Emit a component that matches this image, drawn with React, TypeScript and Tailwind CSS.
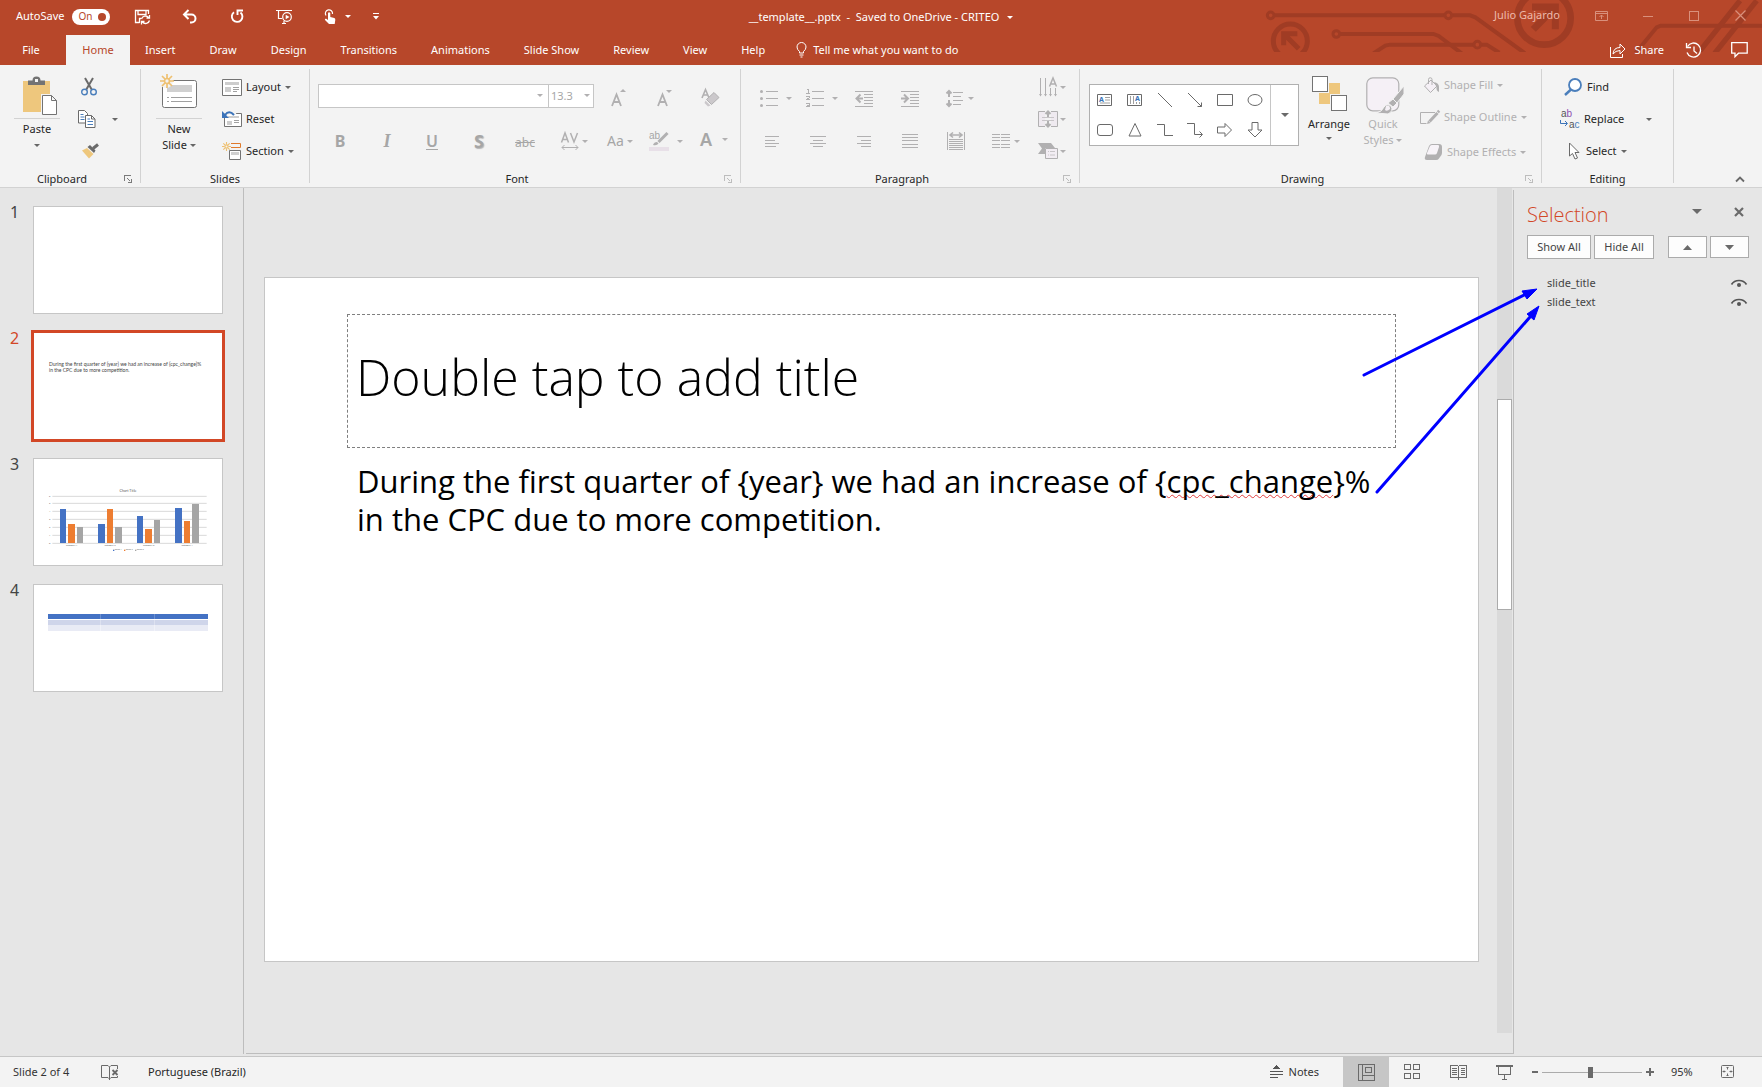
import type { ReactNode } from "react";

type IconProps = { w: number; h: number; children: ReactNode; crisp?: boolean };

function Icon({ w, h, children, crisp }: IconProps) {
  return (
    <svg
      width={w}
      height={h}
      viewBox={`0 0 ${w} ${h}`}
      fill="none"
      aria-hidden="true"
      className="shrink-0 overflow-visible"
      shapeRendering={crisp ? "crispEdges" : "auto"}
    >
      {children}
    </svg>
  );
}

function Caret({ color = "#666666" }: { color?: string }) {
  return (
    <Icon w={6} h={3}>
      <path d="M0 0h6L3 3z" fill={color} />
    </Icon>
  );
}

const OFF = "#b1b0b1";

/* ---------- Title bar ---------- */

function Circuit() {
  return (
    <svg
      className="pointer-events-none absolute top-0 right-0"
      width="522"
      height="52"
      viewBox="0 0 1566 156"
      fill="none"
      stroke="#a03c24"
      aria-hidden="true"
    >
      <g strokeWidth="12">
        <circle cx="92" cy="46" r="10" strokeWidth="9" />
        <path d="M102 46H612M637 46H690L706 52L855 160" />
        <circle cx="625" cy="46" r="10" strokeWidth="9" />
        <circle cx="289" cy="102" r="10" strokeWidth="9" />
        <path d="M300 102H580L596 108L665 160" />
        <path d="M400 160L436 137L450 134H700M724 134H740L778 158" />
        <circle cx="712" cy="134" r="10" strokeWidth="9" />
        <path d="M1186 160L1250 82L1262 77H1566" />
        <path d="M1374 160L1500 2M1424 160L1550 2" strokeWidth="16" />
      </g>
      <circle cx="151" cy="123" r="51" strokeWidth="15" />
      <path d="M131 136V101H172M134 104L176 146" strokeWidth="15" />
      <circle cx="912" cy="54" r="80" strokeWidth="20" />
      <path d="M876 21H946V88M941 26L880 88" strokeWidth="21" />
    </svg>
  );
}

function TitleBar() {
  return (
    <header className="relative flex h-[35px] items-center px-4 text-white">
      <div className="flex flex-1 items-center pb-0.5">
        <span className="text-[11px]">AutoSave</span>
        <button
          type="button"
          role="switch"
          aria-checked="true"
          aria-label="AutoSave"
          className="ml-2 flex h-4 w-[38px] items-center justify-between rounded-full bg-white pr-1 pl-1.5 text-[10px] text-[#b7472a]"
        >
          On
          <span className="h-2 w-2 rounded-full bg-[#b7472a]" />
        </button>
        <button type="button" aria-label="Save" className="ml-[25px]">
          <Icon w={16} h={16}>
            <path d="M13.5 5V1.500H.5v12H4.500M4.500 14V9.500H6M3 1.500v4h8v-4" stroke="#fff" strokeWidth="1.300" />
            <path d="M6.500 10a4 4 0 0 1 7-1.500M14.500 6v3h-3M14.500 11.500a4 4 0 0 1-7 1.500M6.500 15.500v-3h3" stroke="#fff" strokeWidth="1.300" />
          </Icon>
        </button>
        <button type="button" aria-label="Undo" className="ml-[31px]">
          <Icon w={16} h={16}>
            <path d="M6.500 1L2 5.500L6.500 10M2.500 5.500H9.500a4 4 0 0 1 0 8H8" stroke="#fff" strokeWidth="2" />
          </Icon>
        </button>
        <button type="button" aria-label="Repeat" className="ml-[31px]">
          <Icon w={16} h={16}>
            <path d="M11.500 3.500A5.300 5.300 0 1 1 5 3.300" stroke="#fff" strokeWidth="1.900" />
            <path d="M8.500 6V1.500H14" stroke="#fff" strokeWidth="1.900" />
          </Icon>
        </button>
        <button type="button" aria-label="Start from beginning" className="ml-[30px]">
          <Icon w={18} h={17}>
            <path d="M1 2.500H17M3.500 3v7.500H7M7 15.500H11M9 13v2" stroke="#fff" strokeWidth="1.200" />
            <circle cx="12" cy="9" r="4.300" stroke="#fff" strokeWidth="1.200" fill="#b7472a" />
            <path d="M10.700 6.800L14.500 9L10.700 11.200z" fill="#fff" />
          </Icon>
        </button>
        <button type="button" aria-label="Touch/Mouse Mode" className="ml-[30px] flex items-center gap-2">
          <Icon w={14} h={17}>
            <path d="M3 7.500A3.600 3.600 0 1 1 9.500 6" stroke="#fff" strokeWidth="1.200" />
            <path d="M5 5q1-1.500 2.300 0V9l4 1q1.200.5 1 2l-.6 4H6L2 12q-.5-1.500 1.200-1.200L5 12z" fill="#fff" />
          </Icon>
          <Caret color="#ffffff" />
        </button>
        <button type="button" aria-label="Customize Quick Access Toolbar" className="ml-[22px]">
          <Icon w={6} h={7}>
            <path d="M0 .5h6" stroke="#fff" />
            <path d="M0 3h6L3 6.500z" fill="#fff" />
          </Icon>
        </button>
      </div>
      <h1 className="flex items-center gap-2 text-[11px] whitespace-pre">
        __template__.pptx  -  Saved to OneDrive - CRITEO
        <Caret color="#ffffff" />
      </h1>
      <div className="relative flex flex-1 items-center justify-end pb-1 text-[#edb9aa]">
        <span className="mr-[35px] text-[11px]">Julio Gajardo</span>
        <button type="button" aria-label="Ribbon Display Options" className="mr-[35px]">
          <Icon w={13} h={10}>
            <path d="M.5.5h12v9H.5zM.5 2.500h12M6.500 8V4M4.500 6l2-2l2 2" stroke="#d9907c" />
          </Icon>
        </button>
        <button type="button" aria-label="Minimize" className="mr-9">
          <Icon w={10} h={10} crisp>
            <path d="M0 5.500h10" stroke="#d9907c" />
          </Icon>
        </button>
        <button type="button" aria-label="Maximize" className="mr-9">
          <Icon w={10} h={10} crisp>
            <path d="M.5.5h9v9h-9z" stroke="#d9907c" />
          </Icon>
        </button>
        <button type="button" aria-label="Close">
          <Icon w={11} h={11}>
            <path d="M.5.5l10 10M10.500.5l-10 10" stroke="#d9907c" strokeWidth="1.200" />
          </Icon>
        </button>
      </div>
    </header>
  );
}

/* ---------- Tabs ---------- */

const TABS = ["Insert", "Draw", "Design", "Transitions", "Animations", "Slide Show", "Review", "View", "Help"];

function TabStrip() {
  return (
    <nav className="relative flex h-[30px] items-stretch text-[11px] text-white">
      <button type="button" className="w-[66px] pr-1">
        File
      </button>
      <button type="button" aria-current="page" className="w-16 bg-[#f3f3f3] text-[#b7472a]">
        Home
      </button>
      <div className="-ml-0.5 flex">
        {TABS.map((t) => (
          <button type="button" key={t} className="px-[17px]">
            {t}
          </button>
        ))}
      </div>
      <button type="button" className="flex items-center gap-1.5 pl-3.5">
        <Icon w={11} h={16}>
          <path d="M3.500 11V9.500Q1 7.500 1 5a4.500 4.500 0 0 1 9 0Q10 7.500 7.500 9.500V11zM3.500 13h4M4.500 15h2" stroke="#fff" />
        </Icon>
        Tell me what you want to do
      </button>
      <div className="flex flex-1 items-center justify-end pr-3.5">
        <button type="button" className="mr-[21px] flex items-center gap-2">
          <Icon w={16} h={15}>
            <path d="M.5 4v10.500h12V11" stroke="#fff" />
            <path d="M3 11Q3.500 4.500 10 4.500V1l5 5l-5 5V7.500Q5.500 7.500 3 11z" stroke="#fff" />
          </Icon>
          Share
        </button>
        <button type="button" aria-label="Version history" className="mr-7">
          <Icon w={18} h={17}>
            <path d="M2.500 4.500A7 7 0 1 1 2 10.500" stroke="#fff" strokeWidth="1.300" />
            <path d="M1.500 1v4.500H6M9 4.500V9l3 2.500" stroke="#fff" strokeWidth="1.300" />
          </Icon>
        </button>
        <button type="button" aria-label="Comments">
          <Icon w={17} h={16}>
            <path d="M.7.7h15.500v10.500H7.500L4 14.700V11.200H.7z" stroke="#fff" strokeWidth="1.300" />
          </Icon>
        </button>
      </div>
    </nav>
  );
}

/* ---------- Ribbon ---------- */

function Group({
  label,
  width,
  launcher,
  muted,
  children,
}: {
  label: string;
  width: string;
  launcher?: boolean;
  muted?: boolean;
  children: ReactNode;
}) {
  return (
    <section aria-label={label} className={`flex h-[122px] shrink-0 ${width}`}>
      <div className="flex flex-1 flex-col">
        <div className="flex flex-1 items-start pt-1.5">{children}</div>
        <div className="flex h-4 items-center">
          <span className="flex-1 text-center">{label}</span>
          {launcher && (
            <button type="button" aria-label={`${label} settings`} className="w-4">
              <Icon w={8} h={8} crisp>
                <path d="M.5 6V.5H7M3 3l3 3M7.500 3.500v4h-4" stroke={muted ? "#bdbdbd" : "#7a7a7a"} />
              </Icon>
            </button>
          )}
        </div>
      </div>
      <div className="mt-1 h-[114px] w-px bg-[#d2d2d2]" />
    </section>
  );
}

function ClipboardGroup() {
  return (
    <Group label="Clipboard" width="w-[141px]" launcher>
      <button type="button" className="ml-3.5 flex w-[46px] flex-col items-center pt-1.5">
        <span className="pl-1.5">
          <Icon w={34} h={38}>
            <path d="M0 4h27v31H0z" fill="#eec77d" />
            <path d="M5 8V3.500h4.500a4 4 0 0 1 8 0H22V8z" fill="#737373" />
            <rect x="12" y="2" width="3" height="3" fill="#f3f3f3" />
            <path d="M19.500 18.500h9l5 5v14h-14z" fill="#fff" stroke="#f3f3f3" strokeWidth="3" />
            <path d="M19.500 18.500h9l5 5v14h-14zM28.500 18.500v5h5" fill="#fff" stroke="#737373" />
          </Icon>
        </span>
        <span className="mt-[3px] h-px w-full bg-[#d2d2d2]" />
        <span className="mt-0.5 leading-4">Paste</span>
        <span className="flex h-4 items-center">
          <Caret />
        </span>
      </button>
      <div className="ml-[18px] grid grid-rows-[repeat(3,32px)] items-center">
        <button type="button" aria-label="Cut" className="ml-[3px]">
          <Icon w={16} h={18}>
            <path d="M4 0L11 12M12 0L5 12" stroke="#6a6a6a" strokeWidth="2" />
            <circle cx="3.500" cy="14" r="2.800" stroke="#4a7ebb" strokeWidth="1.400" />
            <circle cx="12.500" cy="14" r="2.800" stroke="#4a7ebb" strokeWidth="1.400" />
          </Icon>
        </button>
        <button type="button" aria-label="Copy" className="flex items-center gap-4">
          <Icon w={18} h={18}>
            <path d="M.5.5h6l3 3v9.500h-9z" fill="#fff" stroke="#6a6a6a" />
            <path d="M2.500 4.500h3M2.500 7h4M2.500 9.500h4" stroke="#4a7ebb" />
            <path d="M7.500 5.500h6l3.500 3.500v8.500H7.500z" fill="#fff" stroke="#6a6a6a" />
            <path d="M13.500 5.500V9H17" stroke="#6a6a6a" />
            <path d="M9.500 9h2.500M9.500 11.500h5.500M9.500 14.500h5.500" stroke="#4a7ebb" />
          </Icon>
          <Caret />
        </button>
        <button type="button" aria-label="Format Painter" className="ml-1">
          <Icon w={18} h={16}>
            <path d="M0 7.500L5 5l6.500 6L7 15.500z" fill="#eec77d" />
            <path d="M5.500 4L8 2l5.500 5.500L12 10z" fill="#6a6a6a" />
            <path d="M11 5.500L16 1.500" stroke="#6a6a6a" strokeWidth="3" />
          </Icon>
        </button>
      </div>
    </Group>
  );
}

function Spark({ size }: { size: number }) {
  return (
    <svg width={size} height={size} viewBox="0 0 14 14" fill="none" stroke="#eec071" strokeWidth="1.700">
      <path d="M7 0v4M7 10v4M0 7h4M10 7h4M2 2l3 3M9 9l3 3M12 2L9 5M5 9l-3 3" />
      <circle cx="7" cy="7" r="2.500" />
    </svg>
  );
}

function SlidesGroup() {
  return (
    <Group label="Slides" width="w-[169px]">
      <button type="button" className="ml-[15px] flex w-[46px] flex-col items-center pt-[3px]">
        <Icon w={38} h={34}>
          <rect x="2.500" y="6.500" width="34" height="27" rx="2" fill="#fff" stroke="#737373" />
          <path d="M7 11h25v7H7z" fill="#d0d0d0" />
          <path d="M7 23.500h2M11 23.500h21M7 27.500h2M11 27.500h21" stroke="#a0a0a0" />
          <circle cx="6" cy="7" r="7" fill="#f3f3f3" />
          <Spark size={14} />
        </Icon>
        <span className="mt-2.5 h-px w-full bg-[#d2d2d2]" />
        <span className="mt-0.5 leading-4">New</span>
        <span className="flex items-center gap-[3px] leading-4">
          Slide
          <Caret />
        </span>
      </button>
      <div className="ml-5 grid grid-rows-[repeat(3,32px)] items-center">
        <button type="button" className="flex items-center gap-1">
          <Icon w={20} h={17}>
            <path d="M.5.5h19v16H.5z" fill="#fff" stroke="#737373" />
            <path d="M3 3h14v3H3zM3 8h6v5H3z" fill="#cdcdcd" />
            <path d="M11 8.500h6M11 10.500h6M11 12.500h4" stroke="#a0a0a0" />
          </Icon>
          Layout
          <Caret />
        </button>
        <button type="button" className="flex items-center gap-1">
          <Icon w={20} h={18}>
            <path d="M2.500 3.500h17v13h-17z" fill="#fff" stroke="#737373" />
            <path d="M6 6h11v2H6zM5 11h5v4H5z" fill="#cdcdcd" />
            <path d="M12 10.500h5M12 12.500h5" stroke="#a0a0a0" />
            <path d="M3 6Q7-1 13 5" stroke="#f3f3f3" strokeWidth="4" />
            <path d="M0 1v7h7z" fill="#3b73b9" />
            <path d="M3 5Q7-.5 12 5" stroke="#3b73b9" strokeWidth="2" />
          </Icon>
          Reset
        </button>
        <button type="button" className="flex items-center gap-1">
          <Icon w={20} h={18}>
            <path d="M9 1.500h9.500v4H9" stroke="#e07a2c" />
            <path d="M7.500 8.500h11v9h-11z" fill="#fff" stroke="#737373" />
            <path d="M9 10h8v3H9z" fill="#d0d0d0" />
            <Spark size={9} />
          </Icon>
          Section
          <Caret />
        </button>
      </div>
    </Group>
  );
}

const CELL = "flex h-8 w-[46px] items-center justify-center";
const CELL_LOW = "flex h-8 w-[46px] items-center justify-center pt-1 pl-0.5";
const CELL_MENU = "flex h-8 w-[46px] items-center justify-center gap-[3px] pl-2";

function FontGroup() {
  return (
    <Group label="Font" width="w-[431px]" launcher muted>
      <div className="ml-[7px] flex flex-col pt-[9px] text-[#a6a6a6]">
        <div className="flex h-8 items-center">
          <div className="ml-px flex h-6">
            <div className="relative">
              <select aria-label="Font" disabled className="h-full w-[231px] appearance-none border border-[#c6c6c6] bg-white opacity-100">
                <option></option>
              </select>
              <span className="pointer-events-none absolute top-2.5 right-1.5">
                <Caret color={OFF} />
              </span>
            </div>
            <div className="relative -ml-px">
              <select aria-label="Font size" disabled className="h-full w-[46px] appearance-none border border-[#c6c6c6] bg-white pl-0.5 text-[#a6a6a6] opacity-100">
                <option>13.3</option>
              </select>
              <span className="pointer-events-none absolute top-2.5 right-1">
                <Caret color={OFF} />
              </span>
            </div>
          </div>
          <button type="button" disabled aria-label="Increase Font Size" className={CELL_LOW}>
            <Icon w={15} h={18}>
              <path d="M1 17L5.500 5.500L10 17M2.500 13h6" stroke={OFF} strokeWidth="1.800" />
              <path d="M9 3h6L12 0z" fill={OFF} />
            </Icon>
          </button>
          <button type="button" disabled aria-label="Decrease Font Size" className={CELL_LOW}>
            <Icon w={15} h={18}>
              <path d="M1 17L5.500 5.500L10 17M2.500 13h6" stroke={OFF} strokeWidth="1.800" />
              <path d="M9 1h6L12 4z" fill={OFF} />
            </Icon>
          </button>
          <button type="button" disabled aria-label="Clear Formatting" className={CELL_LOW}>
            <Icon w={19} h={20}>
              <path d="M1 10L4.500 1.500L8 10M2.500 7h4" stroke={OFF} strokeWidth="1.600" />
              <path d="M13 4.500L18 9.500L10.500 16.500L5.500 11.500z" fill="#cbc8cb" stroke={OFF} />
              <path d="M4.500 12.500L9.500 17.500L7 18.500L3.500 15z" fill="#cbc8cb" />
            </Icon>
          </button>
        </div>
        <div className="mt-[13px] flex h-8 items-center">
          <button type="button" disabled aria-label="Bold" className={`${CELL} text-base font-bold`}>
            B
          </button>
          <button type="button" disabled aria-label="Italic" className={`${CELL} pl-0.5 font-['Liberation_Serif',serif] text-lg font-bold italic`}>
            I
          </button>
          <button type="button" disabled aria-label="Underline" className={`${CELL} text-base font-semibold underline underline-offset-2`}>
            U
          </button>
          <button type="button" disabled aria-label="Text Shadow" className={`${CELL} pl-0.5 text-lg font-bold [text-shadow:1px_1px_1px_#b5b5b5]`}>
            S
          </button>
          <button type="button" disabled aria-label="Strikethrough" className={`${CELL} pt-1 pl-0.5 text-xs line-through`}>
            abc
          </button>
          <button type="button" disabled aria-label="Character Spacing" className={CELL_MENU}>
            <Icon w={18} h={18}>
              <path d="M.5 10.500L4 1L7.500 10.500M2 7.500h4M9.500 1L13 10L16.500 1" stroke={OFF} strokeWidth="1.500" />
              <path d="M1 15.500h16M3.500 13L1 15.500L3.500 18M14.500 13l2.500 2.500L14.500 18" stroke={OFF} />
            </Icon>
            <Caret color={OFF} />
          </button>
          <button type="button" disabled aria-label="Change Case" className={`${CELL_MENU} text-sm`}>
            Aa
            <Caret color={OFF} />
          </button>
          <button type="button" disabled aria-label="Text Highlight Color" className="flex h-8 w-[46px] items-center justify-center gap-2 pl-2">
            <Icon w={20} h={20}>
              <text x="0" y="8" fontSize="10" fill="#a6a6a6" fontFamily="Liberation Sans">
                ab
              </text>
              <path d="M4 14q1-3 4-3l1.500 1.500Q8 15 4 14z" fill={OFF} />
              <path d="M9.500 11L18.500 2" stroke={OFF} strokeWidth="3" />
              <path d="M0 16h20v4H0z" fill="#e8e0e8" />
            </Icon>
            <Caret color={OFF} />
          </button>
          <button type="button" disabled aria-label="Font Color" className="flex h-8 w-[46px] items-center justify-center gap-2.5 pb-1 pl-3 text-lg font-semibold">
            A
            <Caret color={OFF} />
          </button>
        </div>
      </div>
    </Group>
  );
}

function Lines({ w, h, d }: { w: number; h: number; d: string }) {
  return (
    <Icon w={w} h={h} crisp>
      <path d={d} stroke={OFF} />
    </Icon>
  );
}

function ParagraphGroup() {
  return (
    <Group label="Paragraph" width="w-[339px]" launcher muted>
      <div className="ml-2 grid grid-cols-[repeat(6,46px)] gap-y-[11px] pt-[11px]">
        <button type="button" disabled aria-label="Bullets" className="flex h-8 w-[46px] items-center justify-center gap-2 pl-2">
          <Icon w={18} h={17}>
            <circle cx="1.500" cy="1.500" r="1.500" fill={OFF} />
            <circle cx="1.500" cy="8.500" r="1.500" fill={OFF} />
            <circle cx="1.500" cy="15.500" r="1.500" fill={OFF} />
            <path d="M6 1.500h12M6 8.500h12M6 15.500h12" stroke={OFF} />
          </Icon>
          <Caret color={OFF} />
        </button>
        <button type="button" disabled aria-label="Numbering" className="flex h-8 w-[46px] items-center justify-center gap-2 pl-2">
          <Icon w={18} h={18} crisp>
            <path d="M1 .5h1.500M2 0v4M0 4h3.500M0 7.500h3M3 7v2M0 10.500h3.500M1 9.500h2M0 14.500h3M3 14v4M1 16h2M0 17.500h3" stroke={OFF} />
            <path d="M6 2.500h12M6 9.500h12M6 16.500h12" stroke={OFF} />
          </Icon>
          <Caret color={OFF} />
        </button>
        <button type="button" disabled aria-label="Decrease List Level" className={CELL}>
          <Icon w={18} h={17}>
            <path d="M0 1.500h18M9 4.500h9M9 7.500h9M9 10.500h9M9 13.500h9M0 16.500h18" stroke={OFF} />
            <path d="M8 8.500H2M5.500 4.500l-4 4l4 4" stroke={OFF} strokeWidth="2" />
          </Icon>
        </button>
        <button type="button" disabled aria-label="Increase List Level" className={CELL}>
          <Icon w={18} h={17}>
            <path d="M0 1.500h18M9 4.500h9M9 7.500h9M9 10.500h9M9 13.500h9M0 16.500h18" stroke={OFF} />
            <path d="M0 8.500h6M3 4.500l4 4l-4 4" stroke={OFF} strokeWidth="2" />
          </Icon>
        </button>
        <button type="button" disabled aria-label="Line Spacing" className="flex h-8 w-[46px] items-center justify-center gap-1 pl-2">
          <Icon w={18} h={19}>
            <path d="M3 2v6M3 11v6M.5 4.500L3 2l2.500 2.500M.5 14.500L3 17l2.500-2.500" stroke={OFF} strokeWidth="2" />
            <path d="M7 3.500h10M7 7.500h8M7 11.500h10M7 15.500h8" stroke={OFF} />
          </Icon>
          <Caret color={OFF} />
        </button>
        <span />
        <button type="button" disabled aria-label="Align Left" className={CELL}>
          <Lines w={14} h={11} d="M0 .5h14M0 4h10M0 7h14M0 10.500h11" />
        </button>
        <button type="button" disabled aria-label="Center" className={CELL}>
          <Lines w={16} h={11} d="M0 .5h16M3 4h10M0 7h16M3 10.500h10" />
        </button>
        <button type="button" disabled aria-label="Align Right" className={CELL}>
          <Lines w={14} h={11} d="M0 .5h14M4 4h10M0 7h14M4 10.500h10" />
        </button>
        <button type="button" disabled aria-label="Justify" className={CELL}>
          <Lines w={16} h={14} d="M0 .5h16M0 3.500h16M0 6.500h16M0 10h16M0 13.500h16" />
        </button>
        <button type="button" disabled aria-label="Distribute" className={CELL}>
          <Icon w={18} h={18}>
            <path d="M.5 0v18M17.500 0v18M2 7.500h14M2 9.500h14M2 11.500h14M2 13.500h14M2 15.500h14M2 17.500h14" stroke={OFF} />
            <path d="M4 3h10M6 .5L3 3l3 2.500M12 .5L15 3l-3 2.500" stroke={OFF} strokeWidth="1.600" />
          </Icon>
        </button>
        <button type="button" disabled aria-label="Columns" className="flex h-8 w-[46px] items-center justify-center gap-1 pl-2">
          <Lines w={18} h={14} d="M0 .5h8M0 3.500h8M0 6.500h8M0 10h8M0 13.500h8M9 .5h9M9 3.500h9M9 6.500h9M9 10h9M9 13.500h9" />
          <Caret color={OFF} />
        </button>
      </div>
      <div className="ml-[13px] grid grid-rows-[repeat(3,32px)] items-center">
        <button type="button" disabled aria-label="Text Direction" className="flex items-center gap-0.5">
          <Icon w={20} h={20}>
            <path d="M2.500 1v18M7.500 1v18M12.500 11v8M17.500 11v8" stroke={OFF} />
            <path d="M1 17h3l-1.500 2.500zM6 17h3l-1.500 2.500zM11 17h3l-1.500 2.500zM16 17h3l-1.500 2.500z" fill={OFF} />
            <path d="M11.500 9.500L15 1L18.500 9.500M13 7h4" stroke={OFF} strokeWidth="1.500" />
          </Icon>
          <Caret color={OFF} />
        </button>
        <button type="button" disabled aria-label="Align Text" className="flex items-center gap-0.5">
          <Icon w={20} h={18}>
            <path d="M7 1.500H.5v15H7M13 1.500h6.500v15H13" stroke={OFF} fill="#efeaf0" />
            <path d="M4 7.500h12M4 10.500h12" stroke="#c8c5c8" />
            <path d="M10 7V2M7.500 4L10 1.500L12.500 4M10 11v5M7.500 14L10 16.500L12.500 14" stroke={OFF} strokeWidth="2" />
          </Icon>
          <Caret color={OFF} />
        </button>
        <button type="button" disabled aria-label="Convert to SmartArt" className="flex items-center gap-0.5">
          <Icon w={20} h={16}>
            <path d="M0 0h13l4 5H7v6H0l4-5.500z" fill={OFF} />
            <path d="M7.500 5.500h12v10h-12z" fill="#f2edf3" stroke={OFF} />
            <path d="M10 8.500h1M12 8.500h5M10 12h1M12 12h5" stroke="#c8c5c8" />
          </Icon>
          <Caret color={OFF} />
        </button>
      </div>
    </Group>
  );
}

const G = "#6a6a6a";

const SHAPES: { name: string; art: ReactNode }[] = [
  {
    name: "Text Box",
    art: (
      <>
        <path d="M.5 2.500h14v11H.5z" stroke={G} />
        <path d="M8 5.500h5M8 8h5M3 11h10" stroke="#a0a0a0" />
        <text x="2" y="10" fontSize="7" fontWeight="bold" fill="#3b73b9" fontFamily="Noto Sans">
          A
        </text>
      </>
    ),
  },
  {
    name: "Vertical Text Box",
    art: (
      <>
        <path d="M.5 2.500h14v11H.5z" stroke={G} />
        <path d="M3.500 4v8M6.500 4v8M9.500 10v2M12.500 10v2" stroke="#a0a0a0" />
        <text x="8" y="9" fontSize="7" fontWeight="bold" fill="#3b73b9" fontFamily="Noto Sans">
          A
        </text>
      </>
    ),
  },
  { name: "Line", art: <path d="M1 1L15 15" stroke={G} /> },
  { name: "Line Arrow", art: <path d="M1 1L14.500 14.500M14.500 10.500v4h-4" stroke={G} /> },
  { name: "Rectangle", art: <path d="M.5 2.500h15v11H.5z" stroke={G} /> },
  { name: "Oval", art: <ellipse cx="8" cy="8" rx="7" ry="5.500" stroke={G} /> },
  { name: "Rounded Rectangle", art: <rect x=".5" y="2.500" width="15" height="11" rx="2.500" stroke={G} /> },
  { name: "Triangle", art: <path d="M8 1.500L14 14H2z" stroke={G} /> },
  { name: "Elbow Connector", art: <path d="M0 2.500h7.500v11H16" stroke={G} /> },
  { name: "Elbow Arrow Connector", art: <path d="M0 1.500h7.500v11H15M12.500 9.500l3 3l-3 3" stroke={G} /> },
  { name: "Right Arrow", art: <path d="M.5 5H8V1.500L14.500 8L8 14.500V11H.5z" stroke={G} /> },
  { name: "Down Arrow", art: <path d="M5 .5h6V8h4L8 15L1 8h4z" stroke={G} /> },
];

function DrawingGroup() {
  return (
    <Group label="Drawing" width="w-[462px]" launcher muted>
      <div className="mt-[13px] ml-[9px] flex h-[62px] w-[210px] border border-[#b0b0b0] bg-white">
        <div className="grid flex-1 grid-cols-6 grid-rows-2">
          {SHAPES.map((s) => (
            <button type="button" key={s.name} aria-label={s.name} className="flex items-center justify-center">
              <Icon w={16} h={16}>
                {s.art}
              </Icon>
            </button>
          ))}
        </div>
        <button type="button" aria-label="More shapes" className="flex w-7 items-center justify-center border-l border-[#c6c6c6]">
          <Icon w={8} h={4}>
            <path d="M0 0h8L4 4z" fill={G} />
          </Icon>
        </button>
      </div>
      <button type="button" className="ml-[7px] flex w-[46px] flex-col items-center pt-[5px]">
        <Icon w={35} h={35} crisp>
          <path d="M17 7h11v11H17zM7 17h11v11H7z" fill="#eec77d" />
          <path d="M.5.5h15v15H.5z" fill="#fff" stroke="#737373" />
          <path d="M18 18h17v17H18z" fill="#f3f3f3" />
          <path d="M19.500 19.500h15v15h-15z" fill="#fff" stroke="#737373" />
        </Icon>
        <span className="mt-[5px] leading-4">Arrange</span>
        <span className="flex h-3 items-center">
          <Caret />
        </span>
      </button>
      <button type="button" disabled className="ml-2 flex w-[46px] flex-col items-center pt-1.5 text-[#b1b0b1]">
        <span className="pl-[3px]">
          <Icon w={38} h={38}>
            <rect x=".8" y=".8" width="32" height="33" rx="6" fill="#f5f0f6" stroke={OFF} strokeWidth="1.200" />
            <path d="M38 9v8L31 26l-4-4z" fill={OFF} stroke="#f3f3f3" />
            <path d="M27 22l4 4l-4 4l-5-4z" fill={OFF} stroke="#f3f3f3" />
            <path d="M10 36q6-1 8-6q3-4 7-1q3 5-3 8z" fill={OFF} stroke="#f3f3f3" />
            <path d="M20 29q4-2 4 3q-3 3-5 1z" fill="#f5f0f6" />
          </Icon>
        </span>
        <span className="mt-px leading-4">Quick</span>
        <span className="flex items-center gap-[3px] leading-4">
          Styles
          <Caret color={OFF} />
        </span>
      </button>
      <div className="ml-3.5 grid grid-rows-[28px_36px_34px] items-center text-[#b1b0b1]">
        <button type="button" disabled className="flex items-center gap-1">
          <Icon w={20} h={17}>
            <path d="M4.500 9L11 3l6 6l-6.500 6.500z" fill="#f5f0f6" stroke={OFF} />
            <path d="M8.500 7V2.500a1.500 1.500 0 0 1 3.500 0V8" stroke={OFF} />
            <path d="M14 5q5 1 5 5v5q-3-1-2.500-5z" fill={OFF} />
          </Icon>
          Shape Fill
          <Caret color={OFF} />
        </button>
        <button type="button" disabled className="flex items-center gap-1">
          <Icon w={20} h={15}>
            <path d="M15 2.500H.5v11h6" stroke={OFF} />
            <path d="M9.500 11.500L17.500 3" stroke={OFF} strokeWidth="3" />
            <path d="M7 14l1-3.500l2.500 2.500z" fill={OFF} />
            <path d="M17.500.5l2 2" stroke={OFF} strokeWidth="2" />
          </Icon>
          Shape Outline
          <Caret color={OFF} />
        </button>
        <button type="button" disabled className="flex items-center gap-1 pl-1">
          <Icon w={19} h={18}>
            <path d="M5 3q1-2 3-2h7q3 0 3 3v6q0 2-2 4l-1 1.500q-1 1.500-3 1.500H3q-3 0-2-3z" fill={OFF} />
            <path d="M6 3q1-1 2-1h6q1.500 0 1 2l-2 6q-.5 1.500-2 1.500H4q-1.500 0-1-1.500z" fill="#f7f3f8" />
          </Icon>
          Shape Effects
          <Caret color={OFF} />
        </button>
      </div>
    </Group>
  );
}

function EditingGroup() {
  return (
    <Group label="Editing" width="w-[132px]">
      <div className="ml-[18px] grid w-[92px] grid-rows-[repeat(3,32px)] items-center">
        <button type="button" className="flex items-center gap-[5px] pl-1">
          <Icon w={18} h={18}>
            <circle cx="11" cy="7" r="6" fill="#fff" stroke="#4a7ebb" strokeWidth="1.800" />
            <path d="M7 11.500L1 17" stroke="#4a7ebb" strokeWidth="2.400" />
          </Icon>
          Find
        </button>
        <div className="flex items-center justify-between">
          <button type="button" className="flex items-center gap-1">
            <Icon w={20} h={20}>
              <g fontSize="10" fontFamily="Liberation Sans">
                <text x="1" y="8" fill="#555">
                  a<tspan fill="#8e4fb0">b</tspan>
                </text>
                <text x="9" y="19" fill="#555">
                  a<tspan fill="#4a7ebb">c</tspan>
                </text>
              </g>
              <path d="M.5 11v3.500H7M5 12l2.500 2.500L5 17" stroke="#3b73b9" />
            </Icon>
            Replace
          </button>
          <button type="button" aria-label="Replace options">
            <Caret />
          </button>
        </div>
        <button type="button" className="flex items-center gap-1 pl-2">
          <Icon w={14} h={18}>
            <path d="M1.500 1v13l3-2.500l2.500 5.500l2.500-1l-2.500-5.500h4z" fill="#fff" stroke={G} />
          </Icon>
          Select
          <Caret />
        </button>
      </div>
    </Group>
  );
}

function Ribbon() {
  return (
    <div className="flex border-b border-[#d2d2d2] bg-[#f3f3f3] text-[11px] text-[#262626]">
      <ClipboardGroup />
      <SlidesGroup />
      <FontGroup />
      <ParagraphGroup />
      <DrawingGroup />
      <EditingGroup />
      <div className="flex flex-1 items-end justify-end pr-[17px] pb-[5px]">
        <button type="button" aria-label="Collapse the Ribbon">
          <Icon w={10} h={6}>
            <path d="M1 5.500L5 1.500L9 5.500" stroke={G} strokeWidth="1.800" />
          </Icon>
        </button>
      </div>
    </div>
  );
}

/* ---------- Slide thumbnails ---------- */

const BARS: [number, number, number, string][] = [
  [180, 18, 957, "#4472c4"],
  [204, 21, 1002, "#ed7d31"],
  [231, 18, 1011, "#a5a5a5"],
  [294, 21, 1002, "#4472c4"],
  [321, 18, 957, "#ed7d31"],
  [345, 21, 1011, "#a5a5a5"],
  [411, 18, 978, "#4472c4"],
  [435, 21, 1017, "#ed7d31"],
  [462, 18, 990, "#a5a5a5"],
  [525, 21, 954, "#4472c4"],
  [552, 18, 993, "#ed7d31"],
  [576, 21, 942, "#a5a5a5"],
];

function ChartThumb() {
  return (
    <svg viewBox="102 807 564 318" className="h-full w-full" role="img" aria-label="Bar chart" fontFamily="Lato">
      {[919, 940, 964, 988, 1012, 1036, 1060].map((y, i) => (
        <g key={y}>
          <path d={`M157 ${y}H620`} stroke="#d9d9d9" strokeWidth="3" />
          <text x="147" y={y + 1} fontSize="7" fill="#595959">
            {6 - i}
          </text>
        </g>
      ))}
      {BARS.map(([x, w, y, c]) => (
        <rect key={x} x={x} y={y} width={w} height={1059 - y} fill={c} />
      ))}
      <text x="384" y="906" fontSize="11" textAnchor="middle" fill="#595959">
        Chart Title
      </text>
      {[215, 330, 446, 561].map((x, i) => (
        <text key={x} x={x} y="1069" fontSize="7" textAnchor="middle" fill="#595959">
          Category {i + 1}
        </text>
      ))}
      {["#4472c4", "#ed7d31", "#a5a5a5"].map((c, i) => (
        <g key={c}>
          <rect x={339 + i * 33} y="1079" width="4" height="4" fill={c} />
          <text x={344 + i * 33} y="1081" fontSize="6" fill="#595959">
            Series {i + 1}
          </text>
        </g>
      ))}
    </svg>
  );
}

function TableThumb() {
  return (
    <div className="mx-auto mt-[29px] grid w-40 grid-cols-[53px_54px_53px]">
      {[0, 1, 2].map((i) => (
        <div key={i}>
          <div className={`h-[5px] bg-[#4472c4] ${i < 2 ? "border-r border-[#6a8fd0]" : ""}`} />
          <div className={`mt-px h-[5px] bg-[#cfd5ea] ${i < 2 ? "border-r border-[#dde1f0]" : ""}`} />
          <div className={`h-1.5 bg-[#e9ebf5] ${i < 2 ? "border-r border-[#f1f2f9]" : ""}`} />
        </div>
      ))}
    </div>
  );
}

function Thumbnails() {
  const items: ReactNode[] = [
    null,
    <p key="t" className="pt-7 pl-[15px] font-['Lato',sans-serif] text-[5px] leading-[6px] text-[#444444]">
      During the first quarter of {"{year}"} we had an increase of {"{cpc_change}%"}
      <br />
      in the CPC due to more competition.
    </p>,
    <ChartThumb key="c" />,
    <TableThumb key="b" />,
  ];
  return (
    <aside aria-label="Slides" className="mb-0.5 w-[244px] shrink-0 border-r border-[#bdbdbd] pt-[18px]">
      <ol className="flex flex-col gap-[18px]">
        {items.map((art, i) => (
          <li key={i} className="flex pl-2.5">
            <span className={`w-[23px] text-base leading-3 ${i === 1 ? "text-[#d24726]" : "text-[#444444]"}`}>{i + 1}</span>
            <button
              type="button"
              aria-label={`Slide ${i + 1}`}
              className={`flex h-[108px] w-[190px] flex-col border bg-white text-left ${
                i === 1 ? "border-[#d24726] ring-2 ring-[#d24726]" : "border-[#c6c6c6]"
              }`}
            >
              {art}
            </button>
          </li>
        ))}
      </ol>
    </aside>
  );
}

/* ---------- Slide canvas ---------- */

function Stage() {
  return (
    <main className="mb-0.5 ml-0.5 flex min-w-0 flex-1 border-b border-[#bdbdbd]">
      <div className="flex min-w-0 flex-1 items-center pr-[18px] pb-[3px] pl-[18px]">
        <article className="flex aspect-[1215/685] w-full flex-col border border-[#c6c6c6] bg-white pt-9 pr-[82px] pl-[82px] text-black">
          <h2 className="flex h-[134px] items-center border border-dashed border-[#7f7f7f] pb-1.5 pl-2 font-['Open_Sans',sans-serif] text-[50px] font-light">
            Double tap to add title
          </h2>
          <p className="mt-3.5 pl-2.5 font-['Open_Sans',sans-serif] text-[31px] leading-[38px] whitespace-nowrap">
            During the first quarter of {"{year}"} we had an increase of {"{"}
            <span className="underline decoration-[#e03c3c] decoration-wavy decoration-1 underline-offset-1 [text-decoration-skip-ink:none]">
              cpc_change
            </span>
            {"}%"}
            <br />
            in the CPC due to more competition.
          </p>
        </article>
      </div>
      <div className="mb-5 w-[15px] bg-[#dadada] pt-[211px]">
        <div className="h-[211px] border border-[#ababab] bg-white" />
      </div>
      <div className="w-px" />
    </main>
  );
}

/* ---------- Selection pane ---------- */

function Pointers() {
  return (
    <svg
      className="pointer-events-none absolute top-24 -left-[152px]"
      width="184"
      height="212"
      viewBox="0 0 184 212"
      aria-hidden="true"
    >
      <g stroke="#0000ff" strokeWidth="3" strokeLinecap="round">
        <path d="M2 89L164 8M15 206L168 31" />
      </g>
      <path d="M175 3L160 5L165 13zM177 20L165 28L172 34z" fill="#0000ff" stroke="#0000ff" />
    </svg>
  );
}

function Eye() {
  return (
    <Icon w={16} h={9}>
      <path d="M.5 5.500Q3 1.500 8 1.500t7.500 4" stroke="#555" strokeWidth="1.700" />
      <circle cx="8" cy="6" r="2" fill="#555" />
    </Icon>
  );
}

function SelectionPane() {
  const box = "flex items-center justify-center border border-[#ababab] bg-[#fdfdfd]";
  return (
    <aside aria-label="Selection" className="relative mt-0.5 mb-0.5 w-[249px] shrink-0 border-l border-[#bdbdbd] pr-[13px] pl-[13px] text-[11px] text-[#444444]">
      <div className="flex h-[45px] items-center">
        <h2 className="flex-1 pt-1 font-['Open_Sans',sans-serif] text-xl font-light text-[#d24726]">Selection</h2>
        <button type="button" aria-label="Task Pane Options" className="mr-8 pb-0.5">
          <Icon w={10} h={5}>
            <path d="M0 0h10L5 5z" fill={G} />
          </Icon>
        </button>
        <button type="button" aria-label="Close pane" className="mr-[5px] pb-0.5">
          <Icon w={10} h={10}>
            <path d="M1 1l8 8M9 1L1 9" stroke={G} strokeWidth="2.200" />
          </Icon>
        </button>
      </div>
      <div className="flex h-6 items-center">
        <button type="button" className={`${box} h-6 w-16`}>
          Show All
        </button>
        <button type="button" className={`${box} ml-[3px] h-6 w-[60px]`}>
          Hide All
        </button>
        <button type="button" aria-label="Bring Forward" className={`${box} ml-auto h-[22px] w-[39px]`}>
          <Icon w={9} h={5}>
            <path d="M0 5h9L4.500 0z" fill={G} />
          </Icon>
        </button>
        <button type="button" aria-label="Send Backward" className={`${box} ml-[3px] h-[22px] w-[39px]`}>
          <Icon w={9} h={5}>
            <path d="M0 0h9L4.500 5z" fill={G} />
          </Icon>
        </button>
      </div>
      <ul className="mt-[15px] pr-0.5 pl-5">
        {["slide_title", "slide_text"].map((n) => (
          <li key={n} className="flex h-[19px] items-center justify-between">
            {n}
            <button type="button" aria-label={`Toggle visibility of ${n}`}>
              <Eye />
            </button>
          </li>
        ))}
      </ul>
      <Pointers />
    </aside>
  );
}

/* ---------- Status bar ---------- */

function StatusBar() {
  const view = "flex w-[46px] items-center justify-center";
  return (
    <footer className="flex h-[31px] items-stretch border-t border-[#c6c6c6] bg-[#f3f3f3] text-[11px] text-[#333333]">
      <div className="flex flex-1 items-center pl-[13px]">
        <span className="w-[88px]">Slide 2 of 4</span>
        <button type="button" aria-label="Spelling" className="mr-[30px]">
          <Icon w={17} h={15}>
            <path d="M16.500 4V.5H10L8.500 2L7 .5H.5v12H7l1.500 1.500l1.500-1.500h6.500V11M8.500 2v13" stroke={G} />
            <path d="M11.500 5l5 5M16.500 5l-5 5" stroke={G} strokeWidth="1.800" />
          </Icon>
        </button>
        <span className="text-[#262626]">Portuguese (Brazil)</span>
      </div>
      <button type="button" className="mr-6 flex items-center gap-1.5">
        <Icon w={13} h={14} crisp>
          <path d="M3 4h7L6.500 0z" fill="#555" />
          <path d="M0 6.500h13M0 9.500h13M0 12.500h8" stroke="#555" />
        </Icon>
        Notes
      </button>
      <button type="button" aria-label="Normal" aria-pressed="true" className={`${view} bg-[#c6c6c6]`}>
        <Icon w={17} h={17} crisp>
          <path d="M.5.5h16v16H.5zM4.500 1v15M5 11.500h11M7.500 3.500h6v5h-6z" stroke={G} />
        </Icon>
      </button>
      <button type="button" aria-label="Slide Sorter" className={view}>
        <Icon w={16} h={16} crisp>
          <path d="M.5.5h6v5h-6zM9.500.5h6v5h-6zM.5 9.500h6v5h-6zM9.500 9.500h6v5h-6z" stroke={G} />
        </Icon>
      </button>
      <button type="button" aria-label="Reading View" className={view}>
        <Icon w={17} h={16} crisp>
          <path d="M.5 1.500h7l1 1l1-1h7v12h-7l-1 1l-1-1h-7zM8.500 2v14M2 4.500h4.500M2 6.500h4.500M2 8.500h4.500M2 10.500h4.500M10.500 4.500H15M10.500 6.500H15M10.500 8.500H15M10.500 10.500H15" stroke={G} />
        </Icon>
      </button>
      <button type="button" aria-label="Slide Show" className={view}>
        <Icon w={17} h={15} crisp>
          <path d="M0 1h17" stroke={G} strokeWidth="2" />
          <path d="M2.500 2v7.500h12V2M8.500 10v4M6 14.500h5" stroke={G} />
        </Icon>
      </button>
      <div className="ml-[5px] flex items-center">
        <button type="button" aria-label="Zoom out">
          <Icon w={6} h={8} crisp>
            <path d="M0 4h6" stroke={G} strokeWidth="2" />
          </Icon>
        </button>
        <input
          type="range"
          aria-label="Zoom"
          min={0}
          max={100}
          defaultValue={48}
          className="mx-1 h-3 w-[100px] appearance-none bg-[linear-gradient(#ababab,#ababab)] bg-[length:100%_1px] bg-center bg-no-repeat [&::-webkit-slider-thumb]:h-[11px] [&::-webkit-slider-thumb]:w-[5px] [&::-webkit-slider-thumb]:appearance-none [&::-webkit-slider-thumb]:bg-[#6a6a6a]"
        />
        <button type="button" aria-label="Zoom in">
          <Icon w={8} h={8} crisp>
            <path d="M0 4h8M4 0v8" stroke={G} strokeWidth="2" />
          </Icon>
        </button>
        <button type="button" className="ml-[17px] w-[50px] text-left">
          95%
        </button>
        <button type="button" aria-label="Fit slide to window" className="mr-7 pb-0.5">
          <Icon w={13} h={13}>
            <rect x=".5" y=".5" width="12" height="12" rx="1" stroke={G} />
            <path d="M6.500 2v2.500M6.500 8.500V11M2 6.500h2.500M8.500 6.500H11" stroke={G} />
            <path d="M5.500 3l1-1l1 1M5.500 10l1 1l1-1M3 5.500l-1 1l1 1M10 5.500l1 1l-1 1" stroke={G} />
          </Icon>
        </button>
      </div>
    </footer>
  );
}

export default function App() {
  return (
    <div className="flex min-h-screen flex-col bg-[#e6e6e6] font-['Noto_Sans',sans-serif]">
      <div className="relative bg-[#b7472a]">
        <Circuit />
        <TitleBar />
        <TabStrip />
      </div>
      <Ribbon />
      <div className="flex flex-1">
        <Thumbnails />
        <Stage />
        <SelectionPane />
      </div>
      <StatusBar />
    </div>
  );
}
